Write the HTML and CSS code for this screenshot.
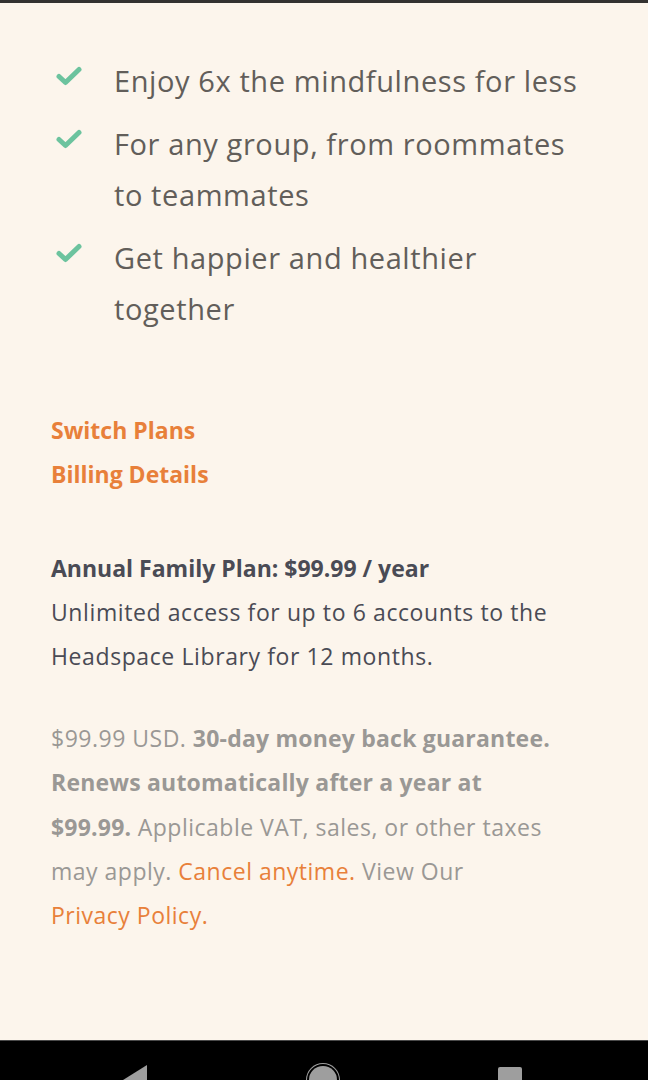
FILE: index.html
```html
<!DOCTYPE html>
<html lang="en">
<head>
<meta charset="utf-8">
<title>Family Plan</title>
<link rel="stylesheet" href="styles.css">
</head>
<body>
<div class="screen">
  <main class="content">
    <ul class="features">
      <li class="feature">
        <svg class="check" viewBox="0 0 26 20" aria-hidden="true"><path d="M3 10.5 L9.5 16.5 L23 3.5" fill="none" stroke="#6cc39e" stroke-width="5" stroke-linecap="round" stroke-linejoin="round"/></svg>
        <span>Enjoy 6x the mindfulness for less</span>
      </li>
      <li class="feature">
        <svg class="check" viewBox="0 0 26 20" aria-hidden="true"><path d="M3 10.5 L9.5 16.5 L23 3.5" fill="none" stroke="#6cc39e" stroke-width="5" stroke-linecap="round" stroke-linejoin="round"/></svg>
        <span>For any group, from roommates to teammates</span>
      </li>
      <li class="feature">
        <svg class="check" viewBox="0 0 26 20" aria-hidden="true"><path d="M3 10.5 L9.5 16.5 L23 3.5" fill="none" stroke="#6cc39e" stroke-width="5" stroke-linecap="round" stroke-linejoin="round"/></svg>
        <span>Get happier and healthier together</span>
      </li>
    </ul>

    <nav class="links">
      <a class="link" href="#">Switch Plans</a>
      <a class="link" href="#">Billing Details</a>
    </nav>

    <section class="plan">
      <p class="plan-title">Annual Family Plan: $99.99 / year</p>
      <p class="plan-desc">Unlimited access for up to 6 accounts to the Headspace Library for 12 months.</p>
    </section>

    <p class="legal">$99.99 USD. <strong>30-day money back guarantee. Renews automatically after a year at $99.99.</strong> Applicable VAT, sales, or other taxes may apply. <a class="inline-link" href="#">Cancel anytime.</a> View Our <a class="inline-link nowrap" href="#">Privacy Policy.</a></p>
  </main>

  <footer class="sysnav">
    <span class="nav-back"></span>
    <span class="nav-home"></span>
    <span class="nav-recent"></span>
  </footer>
</div>
</body>
</html>
```

FILE: styles.css
```css
* { box-sizing: border-box; }

html, body {
  margin: 0;
  padding: 0;
  height: 100%;
}

body {
  background: #fcf5ec;
  font-family: "Open Sans", Lato, sans-serif;
}

.screen {
  height: 1080px;
  display: flex;
  flex-direction: column;
  border-top: 3px solid #333230;
  overflow: hidden;
}

.content {
  flex: 1;
  min-height: 0;
  padding: 52px 40px 0 51px;
}

.features {
  list-style: none;
  margin: 0;
  padding: 0;
  max-width: 533px;
  display: flex;
  flex-direction: column;
  gap: 12px;
}

.feature {
  display: grid;
  grid-template-columns: 63px 1fr;
  font-size: 29px;
  line-height: 51px;
  color: #625e5a;
  letter-spacing: 0.6px;
}

.check {
  width: 26px;
  height: 20px;
  margin: 11px 0 0 5px;
}

.links {
  display: flex;
  flex-direction: column;
  margin-top: 74px;
}

.link {
  font-size: 23px;
  font-weight: 700;
  line-height: 44px;
  color: #e8803a;
  text-decoration: none;
}

.plan {
  margin-top: 50px;
}

.plan p {
  margin: 0;
  font-size: 23px;
  line-height: 44px;
  color: #4a4b55;
}

.plan-title {
  font-weight: 700;
}

.plan-desc {
  letter-spacing: 0.6px;
}

.legal {
  margin: 38px 0 0;
  max-width: 504px;
  font-size: 23px;
  line-height: 44.3px;
  color: #9a9895;
  letter-spacing: 0.5px;
}

.legal strong {
  font-weight: 700;
  letter-spacing: 0.2px;
}

.inline-link {
  color: #e8803a;
  text-decoration: none;
}

.nowrap {
  white-space: nowrap;
}

.sysnav {
  flex: 0 0 40px;
  height: 40px;
  min-height: 0;
  overflow: hidden;
  background: #000;
  border-top: 1px solid #4a4a4a;
  display: flex;
  justify-content: space-between;
  align-items: flex-start;
  padding: 24px 126px 0 123px;
}

.nav-back {
  flex: none;
  width: 0;
  height: 0;
  border-right: 24px solid #9e9e9e;
  border-top: 15px solid transparent;
  border-bottom: 15px solid transparent;
}

.nav-home {
  flex: none;
  width: 28px;
  height: 28px;
  border-radius: 50%;
  background: #9e9e9e;
  box-shadow: 0 0 0 2px #000, 0 0 0 3px #9e9e9e;
  margin-top: 1px;
}

.nav-recent {
  flex: none;
  width: 24px;
  height: 24px;
  background: #9e9e9e;
  border-radius: 2px;
  margin-top: 2px;
}
```
